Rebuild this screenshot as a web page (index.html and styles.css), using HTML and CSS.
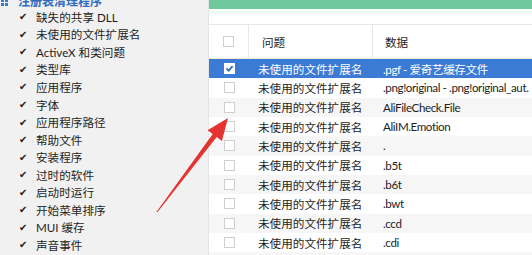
FILE: index.html
```html
<!DOCTYPE html>
<html lang="zh-CN">
<head>
    <meta charset="UTF-8">
    <title>注册表清理程序</title>
    <link rel="stylesheet" href="styles.css">
</head>
<body>

    <!-- Left: scan categories -->
    <div class="sidebar">
        <div class="side-title">
            <svg class="title-icon" width="10" height="10" viewBox="0 0 10 10">
                <rect x="1" y="1" width="3" height="3" fill="#3a78c8"/>
                <rect x="5" y="1" width="3" height="3" fill="#3a78c8"/>
                <rect x="1" y="5" width="3" height="3" fill="#3a78c8"/>
                <rect x="5" y="5" width="3" height="3" fill="#3a78c8"/>
            </svg>
            <span>注册表清理程序</span>
        </div>
        <ul class="check-list">
            <li><span class="tick">✔</span>缺失的共享 DLL</li>
            <li><span class="tick">✔</span>未使用的文件扩展名</li>
            <li><span class="tick">✔</span>ActiveX 和类问题</li>
            <li><span class="tick">✔</span>类型库</li>
            <li><span class="tick">✔</span>应用程序</li>
            <li><span class="tick">✔</span>字体</li>
            <li><span class="tick">✔</span>应用程序路径</li>
            <li><span class="tick">✔</span>帮助文件</li>
            <li><span class="tick">✔</span>安装程序</li>
            <li><span class="tick">✔</span>过时的软件</li>
            <li><span class="tick">✔</span>启动时运行</li>
            <li><span class="tick">✔</span>开始菜单排序</li>
            <li><span class="tick">✔</span>MUI 缓存</li>
            <li><span class="tick">✔</span>声音事件</li>
        </ul>
    </div>

    <!-- Right: results -->
    <div class="main">
        <div class="progress"></div>
        <div class="progress-shade"></div>

        <div class="results">
            <div class="row head">
                <div class="cell box-cell"><span class="box"></span></div>
                <div class="cell issue">问题</div>
                <div class="cell data">数据</div>
            </div>
            <div class="row selected">
                <div class="cell box-cell"><span class="box checked">
                    <svg width="9" height="9" viewBox="0 0 9 9"><path d="M1.5 4.5 L3.7 6.6 L7.6 2.2" fill="none" stroke="#2f6fcf" stroke-width="1.8"/></svg>
                </span></div>
                <div class="cell issue">未使用的文件扩展名</div>
                <div class="cell data">.pgf - 爱奇艺缓存文件</div>
            </div>
            <div class="row">
                <div class="cell box-cell"><span class="box"></span></div>
                <div class="cell issue">未使用的文件扩展名</div>
                <div class="cell data">.png!original - .png!original_aut.</div>
            </div>
            <div class="row alt">
                <div class="cell box-cell"><span class="box"></span></div>
                <div class="cell issue">未使用的文件扩展名</div>
                <div class="cell data">AliFileCheck.File</div>
            </div>
            <div class="row">
                <div class="cell box-cell"><span class="box"></span></div>
                <div class="cell issue">未使用的文件扩展名</div>
                <div class="cell data">AliIM.Emotion</div>
            </div>
            <div class="row alt">
                <div class="cell box-cell"><span class="box"></span></div>
                <div class="cell issue">未使用的文件扩展名</div>
                <div class="cell data">.</div>
            </div>
            <div class="row">
                <div class="cell box-cell"><span class="box"></span></div>
                <div class="cell issue">未使用的文件扩展名</div>
                <div class="cell data">.b5t</div>
            </div>
            <div class="row alt">
                <div class="cell box-cell"><span class="box"></span></div>
                <div class="cell issue">未使用的文件扩展名</div>
                <div class="cell data">.b6t</div>
            </div>
            <div class="row">
                <div class="cell box-cell"><span class="box"></span></div>
                <div class="cell issue">未使用的文件扩展名</div>
                <div class="cell data">.bwt</div>
            </div>
            <div class="row alt">
                <div class="cell box-cell"><span class="box"></span></div>
                <div class="cell issue">未使用的文件扩展名</div>
                <div class="cell data">.ccd</div>
            </div>
            <div class="row">
                <div class="cell box-cell"><span class="box"></span></div>
                <div class="cell issue">未使用的文件扩展名</div>
                <div class="cell data">.cdi</div>
            </div>
            <div class="row alt"></div>
        </div>
    </div>

    <!-- Red annotation arrow -->
    <svg class="arrow" width="532" height="255" viewBox="0 0 532 255">
        <polygon points="228,118 221.9,141 216.7,137.1 157.4,212.3 156.6,211.7 212.7,134.1 207.5,130.2" fill="#e5332f"/>
    </svg>

</body>
</html>
```

FILE: styles.css
```css
/* Basic Reset */
body {
    margin: 0;
    width: 532px;
    height: 255px;
    overflow: hidden;
    display: flex;
    position: relative;
    font-family: Lato, "Noto Sans CJK SC", sans-serif;
    font-size: 11.6px;
    color: #1e1e1e;
    background: #fff;
}

/* Sidebar */
.sidebar {
    width: 208px;
    flex-shrink: 0;
    background: #f1f1f1;
}

.side-title {
    height: 16px;
    margin-top: -8px;
    display: flex;
    align-items: center;
    gap: 8px;
    color: #2f6cbf;
    font-weight: bold;
    font-size: 12px;
}

.title-icon {
    margin-top: 6px;
}

.check-list {
    list-style: none;
    margin: 0;
    padding: 0 0 0 19px;
}

.check-list li {
    height: 17.55px;
    display: flex;
    align-items: center;
    white-space: nowrap;
}

.tick {
    width: 17px;
    font-family: "DejaVu Sans", sans-serif;
    font-size: 10px;
    color: #1a1a1a;
}

/* Main panel */
.main {
    flex: 1;
    min-width: 0;
    border-left: 1px solid #e4e4e4;
}

.progress {
    height: 9px;
    background: #6fc89c;
}

.progress-shade {
    height: 3px;
    margin-top: 2px;
    background: #f0f8f3;
}

.results {
    margin-top: 10px;
    border-top: 1px solid #e6e6e6;
}

.row {
    display: flex;
    height: 19.33px;
    align-items: center;
    white-space: nowrap;
}

.row.alt {
    background: #f6f6f6;
}

.row.head {
    height: 33px;
    border-bottom: 1px solid #f1ecd8;
}

.row.head .cell {
    height: 100%;
    display: flex;
    align-items: center;
}

.row.head .box-cell {
    border-right: 1px solid #e6e6e6;
}

.row.head .issue {
    padding-left: 13px;
    border-right: 1px solid #e6e6e6;
}

.row.head .data {
    padding-left: 12px;
    letter-spacing: 0;
}

.row.selected {
    background: #3b7bd6;
    color: #fff;
}

.cell {
    flex-shrink: 0;
    box-sizing: border-box;
}

.cell.box-cell {
    width: 40px;
    display: flex;
    justify-content: center;
}

.cell.issue {
    width: 124px;
    padding-left: 9px;
}

.cell.data {
    padding-left: 10px;
    letter-spacing: -0.4px;
}

.box {
    width: 11px;
    height: 11px;
    box-sizing: border-box;
    border: 1px solid #cfcfcf;
    background: #fff;
    display: flex;
    align-items: center;
    justify-content: center;
}

.box.checked {
    border-color: #fff;
}

/* Annotation */
.arrow {
    position: absolute;
    left: 0;
    top: 0;
    pointer-events: none;
}
```
